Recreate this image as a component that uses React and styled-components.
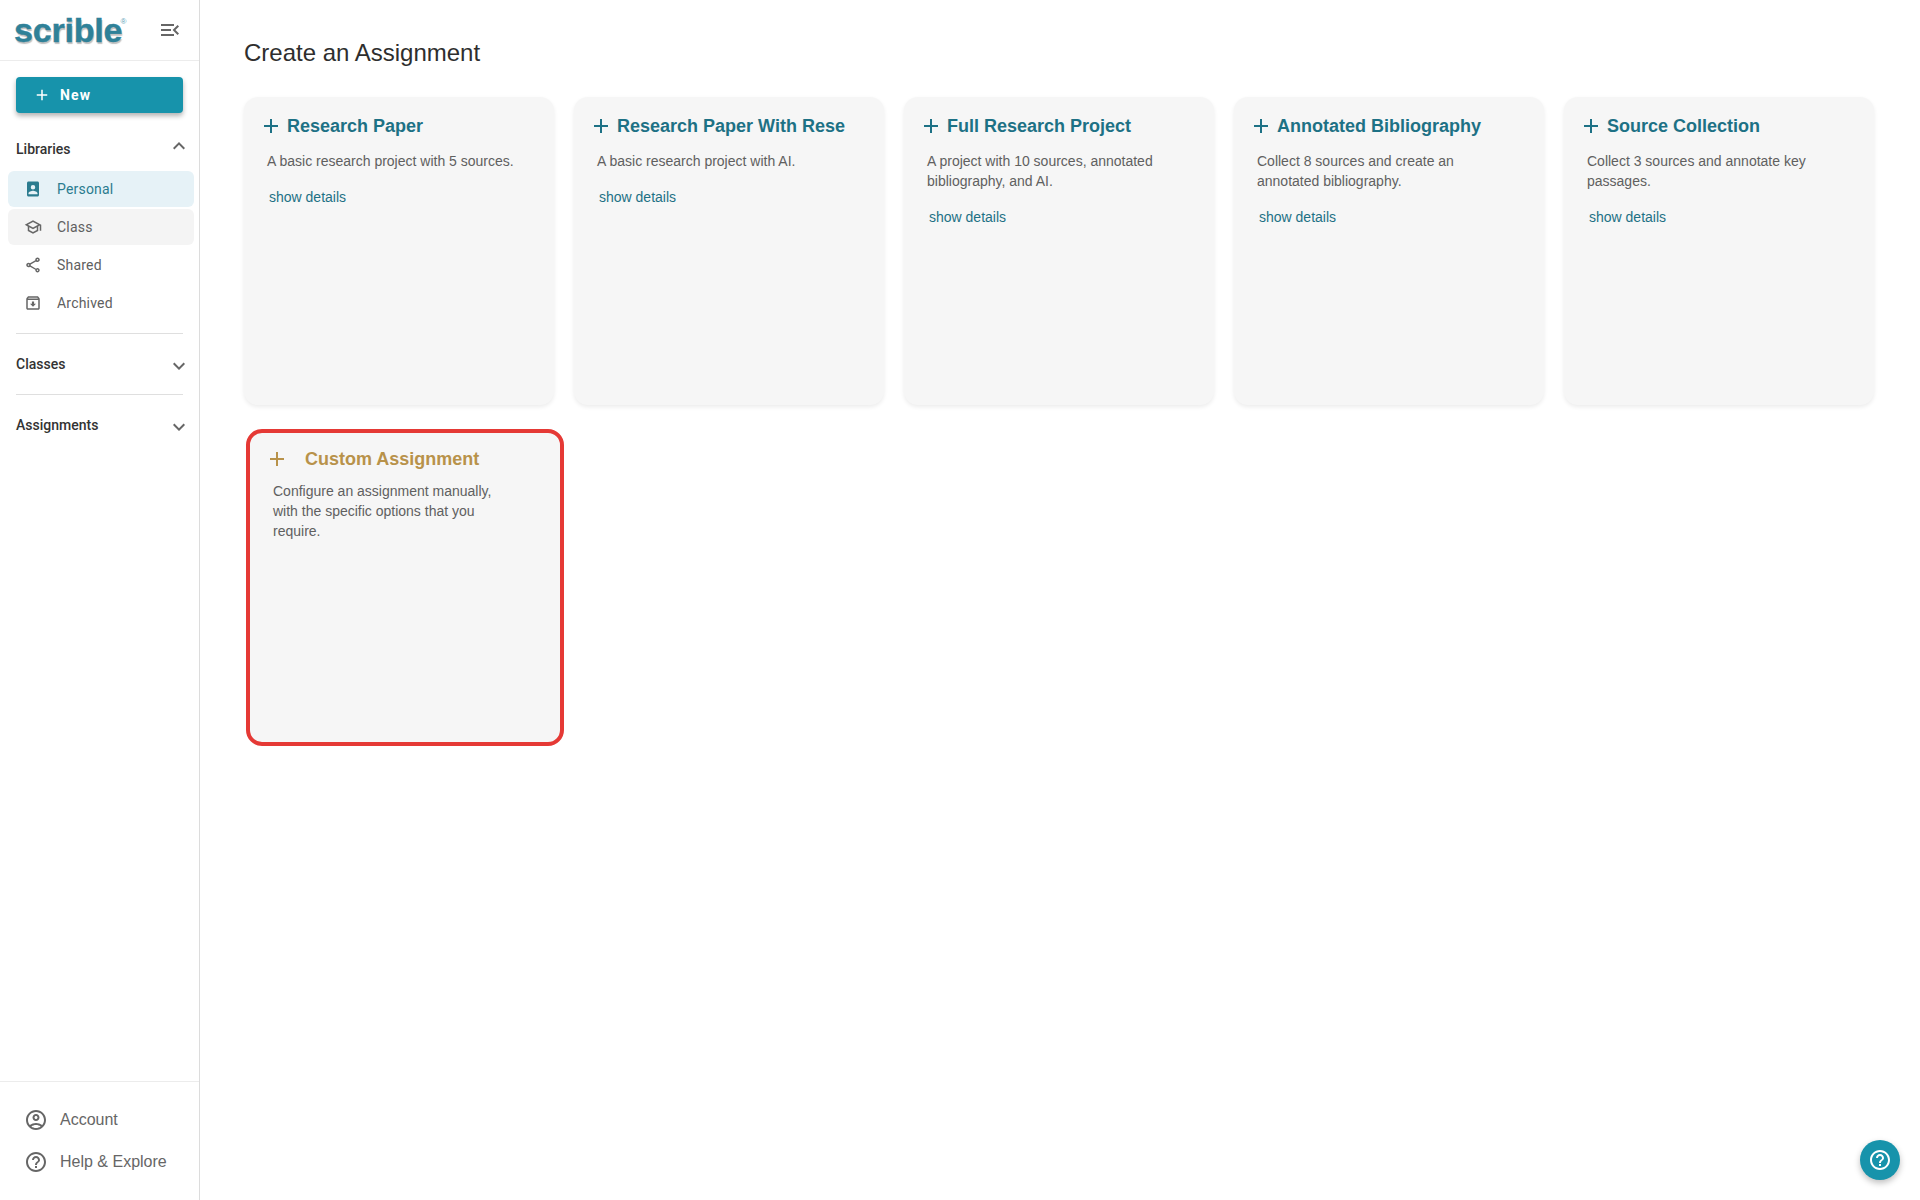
import React from "react";
import styled, { createGlobalStyle } from "styled-components";

const Global = createGlobalStyle`
  html, body { margin: 0; padding: 0; background: #fff; }
  * { box-sizing: border-box; }
`;
const Page = styled.div`
  display: flex; width: 100%; height: 1200px; overflow: hidden; position: relative;
  font-family: "Liberation Sans", Arial, sans-serif;
`;
const Sidebar = styled.aside`
  width: 200px; flex: none; border-right: 1px solid #dcdcdc; display: flex; flex-direction: column; height: 100%;
  font-family: Roboto, sans-serif;
`;
const Brand = styled.div`
  height: 61px; border-bottom: 1px solid #ececec; display: flex; align-items: center; justify-content: space-between;
  padding: 0 17px 0 14px;
`;
const Logo = styled.div`
  font-family: "Liberation Sans", Arial, sans-serif; font-weight: 700; font-size: 34px; letter-spacing: -.2px; color: #2f8198;
  -webkit-text-stroke: .4px #2f8198;
  text-shadow: 1px 2px 1px rgba(0,0,0,.25); line-height: 40px; position: relative; padding-right: 2px;
  sup { position: absolute; top: 8px; right: -2px; font-size: 8px; line-height: 8px; font-weight: 400; text-shadow: none; -webkit-text-stroke: 0; color: #5ea4b8; }
`;
const IconBtn = styled.span`
  display: inline-flex; flex: none; color: ${p => p.$c || "#666"};
  svg { display: block; width: ${p => p.$s || 24}px; height: ${p => p.$s || 24}px; fill: currentColor; }
`;
const NewButton = styled.button`
  margin: 16px 16px 0; height: 36px; border: 0; border-radius: 4px; background: #1793ab; color: #fff;
  font: 700 14px Roboto, sans-serif; letter-spacing: 1.2px; display: flex; align-items: center; gap: 9px; padding: 0 0 0 17px;
  box-shadow: 0 3px 5px rgba(0,0,0,.3);
`;
const SectionHead = styled.div`
  margin: ${p => p.$m}; display: flex; align-items: center; justify-content: space-between;
  font-weight: 500; font-size: 14px; color: #333; height: 20px; padding-left: 16px; padding-right: 8px;
  > span:first-child { position: relative; top: ${p => p.$ly || 0}px; }
  > span:last-child { position: relative; top: ${p => p.$iy || 0}px; }
`;
const List = styled.div`
  display: flex; flex-direction: column; gap: 2px; margin: 12px 5px 0 8px;
`;
const Row = styled.div`
  height: 36px; border-radius: 6px; display: flex; align-items: center; gap: 15px; padding-left: 16px;
  font-size: 14px; letter-spacing: .2px;
  background: ${p => p.$active ? "#e6f2f7" : p.$hover ? "#f4f4f4" : "transparent"};
  color: ${p => p.$active ? "#2b7c8f" : "#606060"};
`;
const Divider = styled.div`
  height: 1px; background: #dfdfdf; margin: ${p => p.$m || "12px 16px 0"};
`;
const Footer = styled.div`
  margin-top: auto; border-top: 1px solid #ececec; padding: 26px 0 0 24px; height: 119px; display: flex; flex-direction: column; gap: 18px;
  font-family: "Liberation Sans", Arial, sans-serif;
`;
const FootRow = styled.div`
  display: flex; align-items: center; gap: 12px; font-size: 16px; color: #666; height: 24px;
`;
const Main = styled.main`
  flex: 1; padding: 36px 44px 0; min-width: 0;
`;
const Title = styled.h1`
  margin: 0; font-weight: 400; font-size: 24px; line-height: 34px; color: #2e2e2e;
`;
const Grid = styled.div`
  display: grid; grid-template-columns: repeat(5, 312px); gap: 18px; margin-top: 27px; align-items: start;
`;
const Card = styled.div`
  height: 308px; margin-right: 2px; background: #f6f6f6; border-radius: 14px; padding: 17px 20px 0 19px;
  box-shadow: 0 2px 4px rgba(0,0,0,.08);
`;
const CardHead = styled.div`
  display: flex; align-items: center; gap: 4px; color: #1d7185; font-weight: 700; font-size: 18px; line-height: 24px; white-space: nowrap;
  margin-left: -4px;
`;
const CardText = styled.p`
  margin: 13px 0 0 4px; font-size: 14px; line-height: 20px; color: #606060; max-width: 255px;
`;
const Details = styled.a`
  display: block; margin: 16px 0 0 6px; font-size: 14px; line-height: 20px; color: #1d7185;
`;
const CustomCard = styled.div`
  width: 318px; height: 317px; margin: 6px 0 0 2px; background: #f6f6f6; border: 4px solid #e53935; border-radius: 16px;
  padding: 14px 20px 0 19px;
`;
const CustomHead = styled.div`
  display: flex; align-items: center; gap: 16px; color: #b8924a; font-weight: 700; font-size: 18px; line-height: 24px; margin-left: -4px;
`;
const CustomText = styled.p`
  margin: 10px 0 0 4px; font-size: 14px; line-height: 20px; color: #606060; max-width: 240px;
`;
const Fab = styled.button`
  position: absolute; right: 20px; bottom: 20px; width: 40px; height: 40px; border-radius: 50%; border: 0; padding: 0;
  background: #1793ab; color: #fff; display: flex; align-items: center; justify-content: center;
  box-shadow: 0 3px 6px rgba(0,0,0,.25);
`;

const P = {
  menu: "M3 18h13v-2H3v2zm0-5h10v-2H3v2zm0-7v2h13V6H3zm18 9.59L17.42 12 21 8.41 19.59 7l-5 5 5 5L21 15.59z",
  plus: "M19 13h-6v6h-2v-6H5v-2h6V5h2v6h6v2z",
  up: "M7.41 15.41 12 10.83l4.59 4.58L18 14l-6-6-6 6z",
  down: "M7.41 8.59 12 13.17l4.59-4.58L18 10l-6 6-6-6z",
  person: "M18 2H6c-1.1 0-2 .9-2 2v16c0 1.1.9 2 2 2h12c1.1 0 2-.9 2-2V4c0-1.1-.9-2-2-2zm-6 4.5a3 3 0 1 1 0 6 3 3 0 0 1 0-6zM18 19H6v-1.2c0-2.3 4-3.6 6-3.6s6 1.3 6 3.6V19z",
  school: "M12 3 1 9l4 2.18v6L12 21l7-3.82v-6l2-1.09V17h2V9L12 3zm6.82 6L12 12.72 5.18 9 12 5.28 18.82 9zM17 15.99l-5 2.73-5-2.73v-3.72L12 15l5-2.73v3.72z",
  share: "M18 16.08c-.76 0-1.44.3-1.96.77L8.91 12.7c.05-.23.09-.46.09-.7s-.04-.47-.09-.7l7.05-4.11c.54.5 1.25.81 2.04.81 1.66 0 3-1.34 3-3s-1.34-3-3-3-3 1.34-3 3c0 .24.04.47.09.7L8.04 9.81C7.5 9.31 6.79 9 6 9c-1.66 0-3 1.34-3 3s1.34 3 3 3c.79 0 1.5-.31 2.04-.81l7.12 4.16c-.05.21-.08.43-.08.65 0 1.61 1.31 2.92 2.92 2.92s2.92-1.31 2.92-2.92c0-1.61-1.31-2.92-2.92-2.92zM18 4c.55 0 1 .45 1 1s-.45 1-1 1-1-.45-1-1 .45-1 1-1zM6 13c-.55 0-1-.45-1-1s.45-1 1-1 1 .45 1 1-.45 1-1 1zm12 7.02c-.55 0-1-.45-1-1s.45-1 1-1 1 .45 1 1-.45 1-1 1z",
  archive: "M20.54 5.23l-1.39-1.68C18.88 3.21 18.47 3 18 3H6c-.47 0-.88.21-1.16.55L3.46 5.23C3.17 5.57 3 6.02 3 6.5V19c0 1.1.9 2 2 2h14c1.1 0 2-.9 2-2V6.5c0-.48-.17-.93-.46-1.27zM6.24 5h11.52l.81.97H5.44l.8-.97zM5 19V8h14v11H5zm8.45-9h-2.9v3H8l4 4 4-4h-2.55z",
  account: "M12 2C6.48 2 2 6.48 2 12s4.48 10 10 10 10-4.48 10-10S17.52 2 12 2zM7.35 18.5C8.66 17.56 10.26 17 12 17s3.34.56 4.65 1.5c-1.31.94-2.91 1.5-4.65 1.5s-3.34-.56-4.65-1.5zm10.79-1.38C16.45 15.8 14.32 15 12 15s-4.45.8-6.14 2.12C4.7 15.73 4 13.95 4 12c0-4.42 3.58-8 8-8s8 3.58 8 8c0 1.95-.7 3.73-1.86 5.12zM12 6c-1.93 0-3.5 1.57-3.5 3.5S10.07 13 12 13s3.5-1.57 3.5-3.5S13.93 6 12 6zm0 5c-.83 0-1.5-.67-1.5-1.5S11.17 8 12 8s1.5.67 1.5 1.5S12.83 11 12 11z",
  help: "M11 18h2v-2h-2v2zm1-16C6.48 2 2 6.48 2 12s4.48 10 10 10 10-4.48 10-10S17.52 2 12 2zm0 18c-4.41 0-8-3.59-8-8s3.59-8 8-8 8 3.59 8 8-3.59 8-8 8zm0-14c-2.21 0-4 1.79-4 4h2c0-1.1.9-2 2-2s2 .9 2 2c0 2-3 1.75-3 5h2c0-2.25 3-2.5 3-5 0-2.21-1.79-4-4-4z",
};
const Icon = ({ d, s, c }) => (
  <IconBtn $s={s} $c={c}><svg viewBox="0 0 24 24"><path d={d} /></svg></IconBtn>
);

const cards = [
  ["Research Paper", "A basic research project with 5 sources."],
  ["Research Paper With Rese", "A basic research project with AI."],
  ["Full Research Project", "A project with 10 sources, annotated bibliography, and AI."],
  ["Annotated Bibliography", "Collect 8 sources and create an annotated bibliography."],
  ["Source Collection", "Collect 3 sources and annotate key passages."],
];

export default function App() {
  return (
    <Page>
      <Global />
      <Sidebar>
        <Brand>
          <Logo>scrible<sup>®</sup></Logo>
          <Icon d={P.menu} s={24} />
        </Brand>
        <NewButton><Icon d={P.plus} s={18} c="#fff" />New</NewButton>
        <SectionHead $m="26px 0 0" $iy={-3}><span>Libraries</span><Icon d={P.up} s={24} /></SectionHead>
        <List>
          <Row $active><Icon d={P.person} s={18} c="#2b7c8f" />Personal</Row>
          <Row $hover><Icon d={P.school} s={18} />Class</Row>
          <Row><Icon d={P.share} s={18} />Shared</Row>
          <Row><Icon d={P.archive} s={18} />Archived</Row>
        </List>
        <Divider />
        <SectionHead $m="21px 0 0" $ly={-1} $iy={1}><span>Classes</span><Icon d={P.down} s={24} /></SectionHead>
        <Divider $m="19px 16px 0" />
        <SectionHead $m="21px 0 0" $ly={-1} $iy={1}><span>Assignments</span><Icon d={P.down} s={24} /></SectionHead>
        <Footer>
          <FootRow><Icon d={P.account} s={24} />Account</FootRow>
          <FootRow><Icon d={P.help} s={24} />Help &amp; Explore</FootRow>
        </Footer>
      </Sidebar>
      <Main>
        <Title>Create an Assignment</Title>
        <Grid>
          {cards.map(([t, d]) => (
            <Card key={t}>
              <CardHead><Icon d={P.plus} s={24} c="#1d7185" />{t}</CardHead>
              <CardText>{d}</CardText>
              <Details>show details</Details>
            </Card>
          ))}
          <CustomCard>
            <CustomHead><Icon d={P.plus} s={24} c="#b8924a" />Custom Assignment</CustomHead>
            <CustomText>Configure an assignment manually, with the specific options that you require.</CustomText>
          </CustomCard>
        </Grid>
      </Main>
      <Fab><Icon d={P.help} s={24} c="#fff" /></Fab>
    </Page>
  );
}
